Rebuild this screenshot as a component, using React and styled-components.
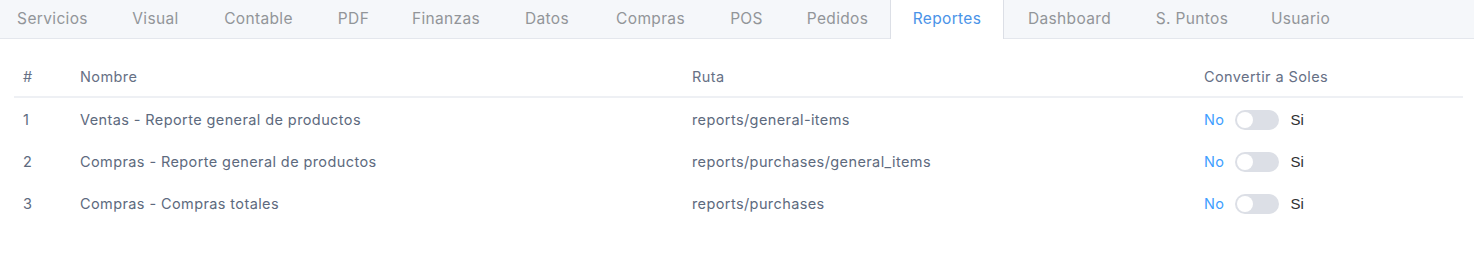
import React, { useState } from 'react';
import styled, { createGlobalStyle } from 'styled-components';

const GlobalStyle = createGlobalStyle`
  * { box-sizing: border-box; }
  body {
    margin: 0;
    background: #ffffff;
    font-family: Inter, "Open Sans", sans-serif;
  }
`;

const Page = styled.div`
  width: 1474px;
  min-height: 272px;
  background: #fff;
`;

const TabBar = styled.nav`
  display: flex;
  height: 39px;
  background: #f5f7fa;
  border-bottom: 1px solid #e4e7ed;
`;

const Tab = styled.div`
  flex: 0 0 ${p => p.$w}px;
  height: 39px;
  padding-bottom: 2px;
  display: flex;
  align-items: center;
  justify-content: center;
  font-size: 15.5px;
  letter-spacing: 0.35px;
  color: ${p => (p.$active ? '#4a93e8' : '#929599')};
  background: ${p => (p.$active ? '#ffffff' : 'transparent')};
  border-left: 1px solid ${p => (p.$active ? '#dcdfe6' : 'transparent')};
  border-right: 1px solid ${p => (p.$active ? '#dcdfe6' : 'transparent')};
  cursor: pointer;

  &:first-child {
    padding-right: 5px;
  }
`;

const Content = styled.div`
  padding: 17px 11px 0 14px;
`;

const Row = styled.div`
  display: grid;
  grid-template-columns: 57px 612px 512px 1fr;
  align-items: center;
  height: 42px;
  border-bottom: ${p => (p.$head ? '2px solid #eef0f4' : 'none')};
`;

const Cell = styled.div`
  padding-left: 9px;
  padding-top: 1px;
  font-size: 14.5px;
  letter-spacing: 0.4px;
  color: ${p => (p.$head ? '#667085' : '#5d6a7e')};
  white-space: nowrap;
`;

const SwitchWrap = styled.div`
  display: flex;
  align-items: center;
  padding-left: 9px;
  padding-top: 1px;
`;

const SwitchLabel = styled.span`
  font-size: ${p => (p.$alt ? '15px' : '14.5px')};
  letter-spacing: ${p => (p.$alt ? '0' : '0.4px')};
  color: ${p => (p.$on ? '#409eff' : '#303133')};
  font-family: ${p => (p.$alt ? '"Liberation Sans", Arial, sans-serif' : 'inherit')};
`;

const Track = styled.button`
  position: relative;
  width: 44px;
  height: 20px;
  margin: 0 11px 0 11px;
  padding: 0;
  border: none;
  border-radius: 10px;
  background: ${p => (p.$checked ? '#409eff' : '#dcdfe6')};
  cursor: pointer;
`;

const Knob = styled.span`
  position: absolute;
  top: 2px;
  left: ${p => (p.$checked ? '26px' : '2px')};
  width: 16px;
  height: 16px;
  border-radius: 50%;
  background: #fff;
  transition: left 0.2s;
`;

const tabs = [
  { label: 'Servicios', w: 110 },
  { label: 'Visual', w: 91 },
  { label: 'Contable', w: 115 },
  { label: 'PDF', w: 75 },
  { label: 'Finanzas', w: 110 },
  { label: 'Datos', w: 92 },
  { label: 'Compras', w: 115 },
  { label: 'POS', w: 77 },
  { label: 'Pedidos', w: 105 },
  { label: 'Reportes', w: 114 },
  { label: 'Dashboard', w: 131 },
  { label: 'S. Puntos', w: 114 },
  { label: 'Usuario', w: 103 },
];

const reports = [
  { id: 1, name: 'Ventas - Reporte general de productos', route: 'reports/general-items' },
  { id: 2, name: 'Compras - Reporte general de productos', route: 'reports/purchases/general_items' },
  { id: 3, name: 'Compras - Compras totales', route: 'reports/purchases' },
];

const Toggle = () => {
  const [checked, setChecked] = useState(false);
  return (
    <SwitchWrap>
      <SwitchLabel $on={!checked}>No</SwitchLabel>
      <Track $checked={checked} onClick={() => setChecked(!checked)}>
        <Knob $checked={checked} />
      </Track>
      <SwitchLabel $on={checked} $alt>Si</SwitchLabel>
    </SwitchWrap>
  );
};

const App = () => {
  const [active, setActive] = useState('Reportes');

  return (
    <Page>
      <GlobalStyle />
      <TabBar>
        {tabs.map(t => (
          <Tab key={t.label} $w={t.w} $active={t.label === active} onClick={() => setActive(t.label)}>
            {t.label}
          </Tab>
        ))}
      </TabBar>
      <Content>
        <Row $head>
          <Cell $head>#</Cell>
          <Cell $head>Nombre</Cell>
          <Cell $head>Ruta</Cell>
          <Cell $head>Convertir a Soles</Cell>
        </Row>
        {reports.map(r => (
          <Row key={r.id}>
            <Cell>{r.id}</Cell>
            <Cell>{r.name}</Cell>
            <Cell>{r.route}</Cell>
            <Toggle />
          </Row>
        ))}
      </Content>
    </Page>
  );
};

export default App;
